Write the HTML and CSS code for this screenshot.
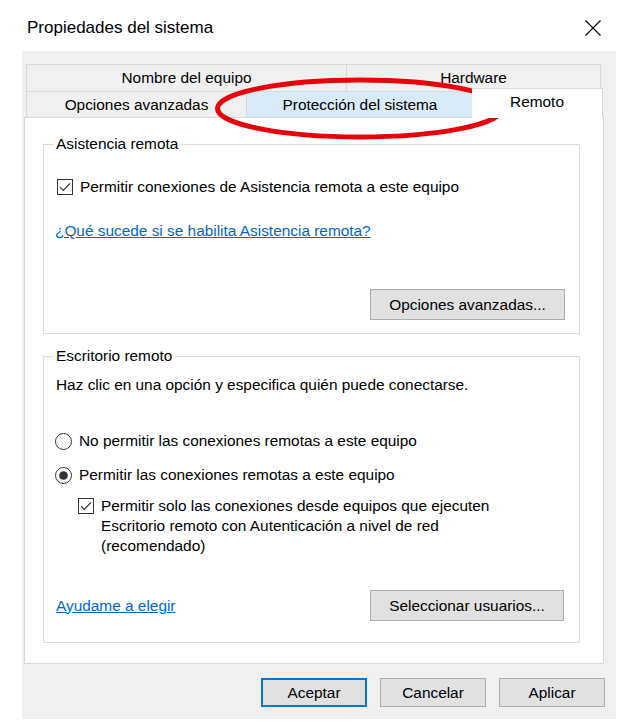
FILE: index.html
```html
<!DOCTYPE html>
<html lang="es">
<head>
<meta charset="utf-8">
<title>Propiedades del sistema</title>
<link rel="stylesheet" href="styles.css">
</head>
<body>
  <div class="titlebar">
    <span class="title">Propiedades del sistema</span>
    <svg class="close" width="16" height="16" viewBox="0 0 16 16"><path d="M0.5 0.5 L15.5 15.5 M15.5 0.5 L0.5 15.5" stroke="#000" stroke-width="1.1" fill="none"/></svg>
  </div>
  <div class="dialog">
    <div class="tabs">
      <div class="tabrow">
        <div class="tab t-nombre">Nombre del equipo</div>
        <div class="tab t-hw">Hardware</div>
      </div>
      <div class="tabrow">
        <div class="tab t-opc">Opciones avanzadas</div>
        <div class="tab t-prot">Protección del sistema</div>
        <div class="tab t-rem">Remoto</div>
      </div>
    </div>
    <div class="panel">
      <fieldset class="group g1">
        <legend>Asistencia remota</legend>
        <div class="opt chk-row">
          <svg class="chk" width="16" height="16" viewBox="0 0 16 16"><rect x="0.5" y="0.5" width="15" height="15" fill="#fff" stroke="#333"/><path d="M3 8.2 L6.3 11.5 L13 4.3" stroke="#333" stroke-width="1.2" fill="none"/></svg>
          <span>Permitir conexiones de Asistencia remota a este equipo</span>
        </div>
        <a class="link l1" href="#">¿Qué sucede si se habilita Asistencia remota?</a>
        <div class="btnrow b1">
          <button class="btn btn-opc">Opciones avanzadas...</button>
        </div>
      </fieldset>
      <fieldset class="group g2">
        <legend>Escritorio remoto</legend>
        <div class="line intro">Haz clic en una opción y especifica quién puede conectarse.</div>
        <div class="opt radio-row r1">
          <svg class="radio" width="17" height="17" viewBox="0 0 17 17"><circle cx="8.5" cy="8.5" r="8" fill="#fff" stroke="#333"/></svg>
          <span>No permitir las conexiones remotas a este equipo</span>
        </div>
        <div class="opt radio-row r2">
          <svg class="radio" width="17" height="17" viewBox="0 0 17 17"><circle cx="8.5" cy="8.5" r="8" fill="#fff" stroke="#333"/><circle cx="8.5" cy="8.5" r="4.3" fill="#333"/></svg>
          <span>Permitir las conexiones remotas a este equipo</span>
        </div>
        <div class="nla">
          <svg class="chk" width="16" height="16" viewBox="0 0 16 16"><rect x="0.5" y="0.5" width="15" height="15" fill="#fff" stroke="#333"/><path d="M3 8.2 L6.3 11.5 L13 4.3" stroke="#333" stroke-width="1.2" fill="none"/></svg>
          <span class="nla-text">Permitir solo las conexiones desde equipos que ejecuten<br>Escritorio remoto con Autenticación a nivel de red<br>(recomendado)</span>
        </div>
        <div class="btnrow b2">
          <a class="link" href="#">Ayudame a elegir</a>
          <button class="btn btn-sel">Seleccionar usuarios...</button>
        </div>
      </fieldset>
    </div>
    <div class="footer">
      <button class="btn fbtn default">Aceptar</button>
      <button class="btn fbtn">Cancelar</button>
      <button class="btn fbtn">Aplicar</button>
    </div>
  </div>
  <svg class="highlight" width="296" height="70" viewBox="0 0 296 70"><ellipse cx="148" cy="34.5" rx="142.5" ry="28.5" fill="none" stroke="#e8000b" stroke-width="5"/></svg>
</body>
</html>
```
FILE: styles.css
```css
* { box-sizing: border-box; }
html, body { margin: 0; padding: 0; }
body {
  width: 625px;
  height: 728px;
  background: #fff;
  font-family: "Liberation Sans", Arial, sans-serif;
  font-size: 15.4px;
  color: #000;
  position: relative;
  overflow: hidden;
}
.titlebar {
  height: 51px;
  display: flex;
  align-items: center;
  justify-content: space-between;
  padding: 5px 24px 0 27px;
}
.title { font-size: 17px; line-height: 20px; }
.close { display: block; margin-top: 0; }

.dialog {
  margin-left: 22px;
  width: 594px;
  height: 668px;
  background: #f0f0f0;
  padding: 13px 0 0 2px;
}
.tabs { margin-left: 2px; width: 575px; }
.tabrow { display: flex; }
.tabrow:first-child { height: 27px; }
.tabrow:last-child { height: 26px; }
.tab {
  border: 1px solid #d9d9d9;
  border-bottom: none;
  background: #f0f0f0;
  display: flex;
  align-items: center;
  justify-content: center;
  line-height: 18px;
  white-space: nowrap;
}
.tab + .tab { border-left: none; }
.t-nombre { width: 321px; }
.t-hw { width: 254px; }
.t-opc { width: 221px; }
.t-prot { width: 227px; background: #d9ebf9; }
.t-rem {
  width: 131px;
  height: 30px;
  margin: -3px -2px 0 -2px;
  background: #fff;
  border-left: 1px solid #d9d9d9;
  position: relative;
  z-index: 1;
  padding-bottom: 3px;
}

.panel {
  width: 580px;
  height: 547px;
  background: #fff;
  border: 1px solid #d9d9d9;
  padding: 17px 0 0 18px;
}
.group {
  margin: 0;
  width: 537px;
  border: 1px solid #dcdcdc;
  padding: 0 0 0 12px;
  min-width: 0;
}
.group legend {
  padding: 0 3px;
  margin-left: -3px;
  line-height: 18px;
}
.g1 { padding-bottom: 13px; }
.g2 { margin-top: 13px; padding-bottom: 21px; }

.opt {
  display: flex;
  align-items: center;
  gap: 7px;
  height: 20px;
  white-space: nowrap;
}
.chk, .radio { display: block; flex: none; }
.chk-row { margin-top: 24px; margin-left: 1px; }
.link {
  display: block;
  color: #0066cc;
  text-decoration: underline;
  line-height: 20px;
}
.l1 { margin-top: 24px; width: max-content; margin-left: -1px; }
.btnrow { display: flex; align-items: center; justify-content: space-between; }
.b1 { margin-top: 48px; justify-content: flex-end; padding-right: 14px; }
.b2 { margin-top: 34px; padding-right: 15px; }

.btn {
  font-family: inherit;
  font-size: 15.4px;
  color: #000;
  background: #e1e1e1;
  border: 1px solid #adadad;
  border-radius: 0;
  padding: 0;
  line-height: 18px;
}
.btn-opc { width: 195px; height: 31px; }
.btn-sel { width: 194px; height: 31px; }

.line { line-height: 20px; }
.intro { margin-top: 10px; }
.r1 { margin-top: 36px; margin-left: -1px; }
.r2 { margin-top: 14px; margin-left: -1px; }
.nla {
  display: flex;
  align-items: flex-start;
  gap: 7px;
  margin-top: 11px;
  margin-left: 22px;
}
.nla .chk { margin-top: 2px; }
.nla-text { line-height: 20px; }

.footer {
  display: flex;
  justify-content: flex-end;
  gap: 13px;
  margin-top: 14px;
  padding-right: 11px;
}
.fbtn { width: 106px; height: 29px; }
.fbtn.default { border: 2px solid #0078d7; }

.highlight {
  position: absolute;
  left: 212px;
  top: 74px;
  pointer-events: none;
}
```
